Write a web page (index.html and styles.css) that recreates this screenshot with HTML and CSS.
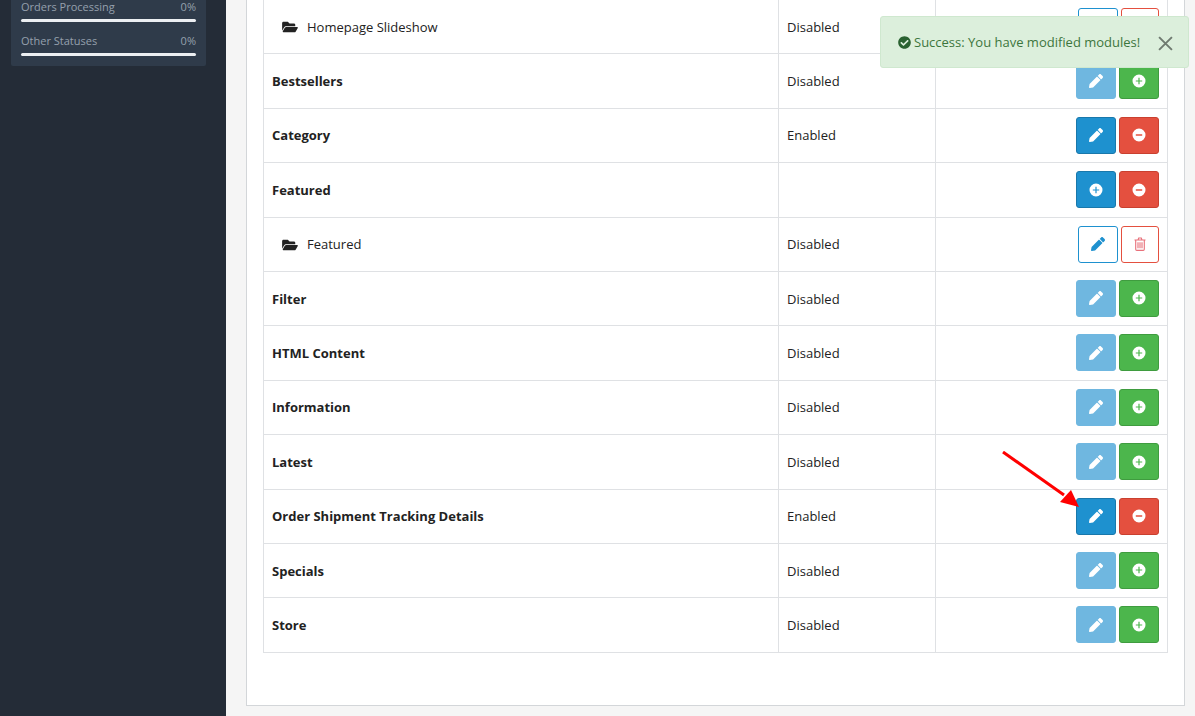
FILE: index.html
```html
<!DOCTYPE html>
<html lang="en">
<head>
<meta charset="utf-8">
<title>Modules</title>
<link rel="stylesheet" href="styles.css">
</head>
<body>
<svg class="defs" aria-hidden="true">
  <symbol id="i-pencil" viewBox="0 0 512 512"><path d="M497.9 142.1l-46.1 46.1c-4.7 4.7-12.3 4.7-17 0l-111-111c-4.7-4.7-4.7-12.3 0-17l46.1-46.1c18.7-18.7 49.1-18.7 67.9 0l60.1 60.1c18.8 18.7 18.8 49.1 0 67.9zM284.2 99.8L21.6 362.4.4 483.9c-2.9 16.4 11.4 30.6 27.8 27.8l121.5-21.3 262.6-262.6c4.7-4.7 4.7-12.3 0-17l-111-111c-4.8-4.7-12.4-4.7-17.1 0z"/></symbol>
  <symbol id="i-folder" viewBox="0 0 576 512"><path d="M572.694 292.093L500.27 416.248A63.997 63.997 0 0 1 444.989 448H45.025c-18.523 0-30.064-20.093-20.731-36.093l72.424-124.155A64 64 0 0 1 152 256h399.964c18.523 0 30.064 20.093 20.73 36.093zM152 224h328v-48c0-26.51-21.49-48-48-48H272l-64-64H48C21.49 64 0 85.49 0 112v278.046l69.077-118.418C86.214 242.25 117.989 224 152 224z"/></symbol>
  <symbol id="i-check" viewBox="0 0 512 512"><path d="M504 256c0 136.967-111.033 248-248 248S8 392.967 8 256 119.033 8 256 8s248 111.033 248 248zM227.314 387.314l184-184c6.248-6.248 6.248-16.379 0-22.627l-22.627-22.627c-6.248-6.249-16.379-6.249-22.628 0L216 308.118l-70.059-70.059c-6.248-6.248-16.379-6.248-22.628 0l-22.627 22.627c-6.248 6.248-6.248 16.379 0 22.627l104 104c6.249 6.249 16.379 6.249 22.628.001z"/></symbol>
  <symbol id="i-plus" viewBox="0 0 14 14"><path fill-rule="evenodd" d="M7 .5a6.500 6.500 0 1 0 0 13 6.500 6.500 0 0 0 0-13zM6.400 3.800h1.200v2.600h2.600v1.200H7.600v2.600H6.400V7.600H3.800V6.400h2.600z"/></symbol>
  <symbol id="i-minus" viewBox="0 0 14 14"><path fill-rule="evenodd" d="M7 .5a6.500 6.500 0 1 0 0 13 6.500 6.500 0 0 0 0-13zM3.800 6.300h6.400v1.400H3.800z"/></symbol>
  <symbol id="i-trash" viewBox="0 0 12 14"><path fill="none" stroke="currentColor" stroke-width="1.100" d="M.5 3h11M4 3l.7-2h2.600L8 3M1.700 3v9.200c0 .7.5 1.200 1.100 1.200h6.400c.6 0 1.100-.5 1.100-1.200V3M4 5.200v6M6 5.200v6M8 5.200v6"/></symbol>
</svg>

<div class="app">
  <aside class="sidebar">
    <div class="stats">
      <div class="stat">
        <div class="stat-label"><span>Orders Processing</span><span>0%</span></div>
        <div class="stat-bar"></div>
      </div>
      <div class="stat">
        <div class="stat-label"><span>Other Statuses</span><span>0%</span></div>
        <div class="stat-bar"></div>
      </div>
    </div>
  </aside>

  <main class="main">
    <section class="panel">
      <table class="modules">
        <colgroup><col class="col-name"><col class="col-status"><col class="col-action"></colgroup>
        <tbody>
          <tr>
            <td class="child"><svg class="folder"><use href="#i-folder"/></svg>Homepage Slideshow</td>
            <td>Disabled</td>
            <td class="actions"><a class="btn outline-blue"><svg class="ico"><use href="#i-pencil"/></svg></a><a class="btn outline-red"><svg class="ico trash"><use href="#i-trash"/></svg></a></td>
          </tr>
          <tr>
            <td class="name">Bestsellers</td>
            <td>Disabled</td>
            <td class="actions"><a class="btn muted"><svg class="ico"><use href="#i-pencil"/></svg></a><a class="btn green"><svg class="ico"><use href="#i-plus"/></svg></a></td>
          </tr>
          <tr>
            <td class="name">Category</td>
            <td>Enabled</td>
            <td class="actions"><a class="btn blue"><svg class="ico"><use href="#i-pencil"/></svg></a><a class="btn red"><svg class="ico"><use href="#i-minus"/></svg></a></td>
          </tr>
          <tr>
            <td class="name">Featured</td>
            <td></td>
            <td class="actions"><a class="btn blue"><svg class="ico"><use href="#i-plus"/></svg></a><a class="btn red"><svg class="ico"><use href="#i-minus"/></svg></a></td>
          </tr>
          <tr>
            <td class="child"><svg class="folder"><use href="#i-folder"/></svg>Featured</td>
            <td>Disabled</td>
            <td class="actions"><a class="btn outline-blue"><svg class="ico"><use href="#i-pencil"/></svg></a><a class="btn outline-red"><svg class="ico trash"><use href="#i-trash"/></svg></a></td>
          </tr>
          <tr>
            <td class="name">Filter</td>
            <td>Disabled</td>
            <td class="actions"><a class="btn muted"><svg class="ico"><use href="#i-pencil"/></svg></a><a class="btn green"><svg class="ico"><use href="#i-plus"/></svg></a></td>
          </tr>
          <tr>
            <td class="name">HTML Content</td>
            <td>Disabled</td>
            <td class="actions"><a class="btn muted"><svg class="ico"><use href="#i-pencil"/></svg></a><a class="btn green"><svg class="ico"><use href="#i-plus"/></svg></a></td>
          </tr>
          <tr>
            <td class="name">Information</td>
            <td>Disabled</td>
            <td class="actions"><a class="btn muted"><svg class="ico"><use href="#i-pencil"/></svg></a><a class="btn green"><svg class="ico"><use href="#i-plus"/></svg></a></td>
          </tr>
          <tr>
            <td class="name">Latest</td>
            <td>Disabled</td>
            <td class="actions"><a class="btn muted"><svg class="ico"><use href="#i-pencil"/></svg></a><a class="btn green"><svg class="ico"><use href="#i-plus"/></svg></a></td>
          </tr>
          <tr>
            <td class="name">Order Shipment Tracking Details</td>
            <td>Enabled</td>
            <td class="actions"><a class="btn blue"><svg class="ico"><use href="#i-pencil"/></svg></a><a class="btn red"><svg class="ico"><use href="#i-minus"/></svg></a></td>
          </tr>
          <tr>
            <td class="name">Specials</td>
            <td>Disabled</td>
            <td class="actions"><a class="btn muted"><svg class="ico"><use href="#i-pencil"/></svg></a><a class="btn green"><svg class="ico"><use href="#i-plus"/></svg></a></td>
          </tr>
          <tr>
            <td class="name">Store</td>
            <td>Disabled</td>
            <td class="actions"><a class="btn muted"><svg class="ico"><use href="#i-pencil"/></svg></a><a class="btn green"><svg class="ico"><use href="#i-plus"/></svg></a></td>
          </tr>
        </tbody>
      </table>
    </section>
  </main>
</div>

<div class="toast">
  <svg class="toast-check"><use href="#i-check"/></svg>
  <span class="toast-text">Success: You have modified modules!</span>
  <svg class="toast-close" viewBox="0 0 14 14"><path d="M1 1l12 12M13 1L1 13"/></svg>
</div>

<svg class="arrow" viewBox="0 0 90 70">
  <path class="arrow-line" d="M1 1L62 44"/>
  <path class="arrow-head" d="M77 56L58 51L69 39z"/>
</svg>
</body>
</html>
```
FILE: styles.css
```css
* { box-sizing: border-box; }
html, body { margin: 0; height: 100%; }
body {
  overflow: hidden;
  background: #f5f5f5;
  color: #222;
  font-family: "Open Sans", sans-serif;
  font-size: 13px;
  line-height: 1.43;
}
.defs { display: none; }
.app { display: flex; height: 716px; overflow: hidden; }

.sidebar { flex: 0 0 226px; background: #242c37; padding: 0 20px 0 11px; }
.stats {
  margin-top: -10px;
  padding: 10px 10px 12px;
  height: 76px;
  background: #2f3b4a;
  border-radius: 0 0 2px 2px;
}
.stat { height: 34px; }
.stat-label {
  display: flex;
  justify-content: space-between;
  height: 17px;
  color: #95a0ad;
  font-size: 11px;
  line-height: 14px;
}
.stat-bar { margin-top: 1.500px; height: 3px; border-radius: 2px; background: #eceff2; }

.main { flex: 1; min-width: 0; padding: 0 10px 10px 20px; }
.panel {
  margin-top: -22px;
  height: 728px;
  padding: 20px 17px 0 16px;
  background: #fff;
  border: 1px solid #d3d6d9;
}
.modules {
  width: 904px;
  table-layout: fixed;
  border-collapse: collapse;
  border: 1px solid #dfe1e4;
}
.col-name { width: 515px; }
.col-status { width: 157px; }
.col-action { width: 232px; }
.modules tr { height: 54.400px; }
.modules td {
  padding: 0.600px 8px 0;
  border: 1px solid #dfe1e4;
  vertical-align: middle;
}
.name { font-weight: 700; }
.modules td.child { padding-left: 18px; }
.folder { width: 16px; height: 14px; margin-right: 9px; vertical-align: -2.500px; fill: #222; }

.modules td.actions { padding: 0 8px 0.400px; text-align: right; }
.btn {
  display: inline-flex;
  align-items: center;
  justify-content: center;
  width: 40px;
  height: 37px;
  margin-left: 3px;
  border: 1px solid transparent;
  border-radius: 3px;
  vertical-align: middle;
}
.ico { width: 14px; height: 14px; fill: #fff; }
.trash { width: 12px; height: 14px; color: #e8707a; }
.blue { background: #1e91cf; border-color: #1978ab; }
.red { background: #e4503f; border-color: #c9402f; }
.green { background: #4cb64c; border-color: #3f9c3f; }
.muted { background: #6fb7e0; border-color: #6fb7e0; }
.outline-blue { background: #fff; border-color: #1e91cf; }
.outline-blue .ico { fill: #1e91cf; }
.outline-red { width: 38px; background: #fff; border-color: #e4503f; }

.toast {
  position: absolute;
  left: 880px;
  top: 16px;
  width: 309px;
  height: 52px;
  display: flex;
  align-items: center;
  padding-left: 17px;
  background: #dcefdc;
  border: 1px solid #cfe8cf;
  border-radius: 3px;
  color: #3c763d;
}
.toast-check { flex: none; width: 13px; height: 13px; margin-right: 3px; fill: #2a6231; }
.toast-text { flex: none; line-height: 17px; }
.toast-close {
  flex: none;
  width: 15px;
  height: 15px;
  margin: 2px 0 0 18px;
  fill: none;
  stroke: #6f7a70;
  stroke-width: 1.800;
}

.arrow { position: absolute; left: 1002px; top: 451px; width: 90px; height: 70px; }
.arrow-line { fill: none; stroke: #f00; stroke-width: 3; }
.arrow-head { fill: #f00; }
```
